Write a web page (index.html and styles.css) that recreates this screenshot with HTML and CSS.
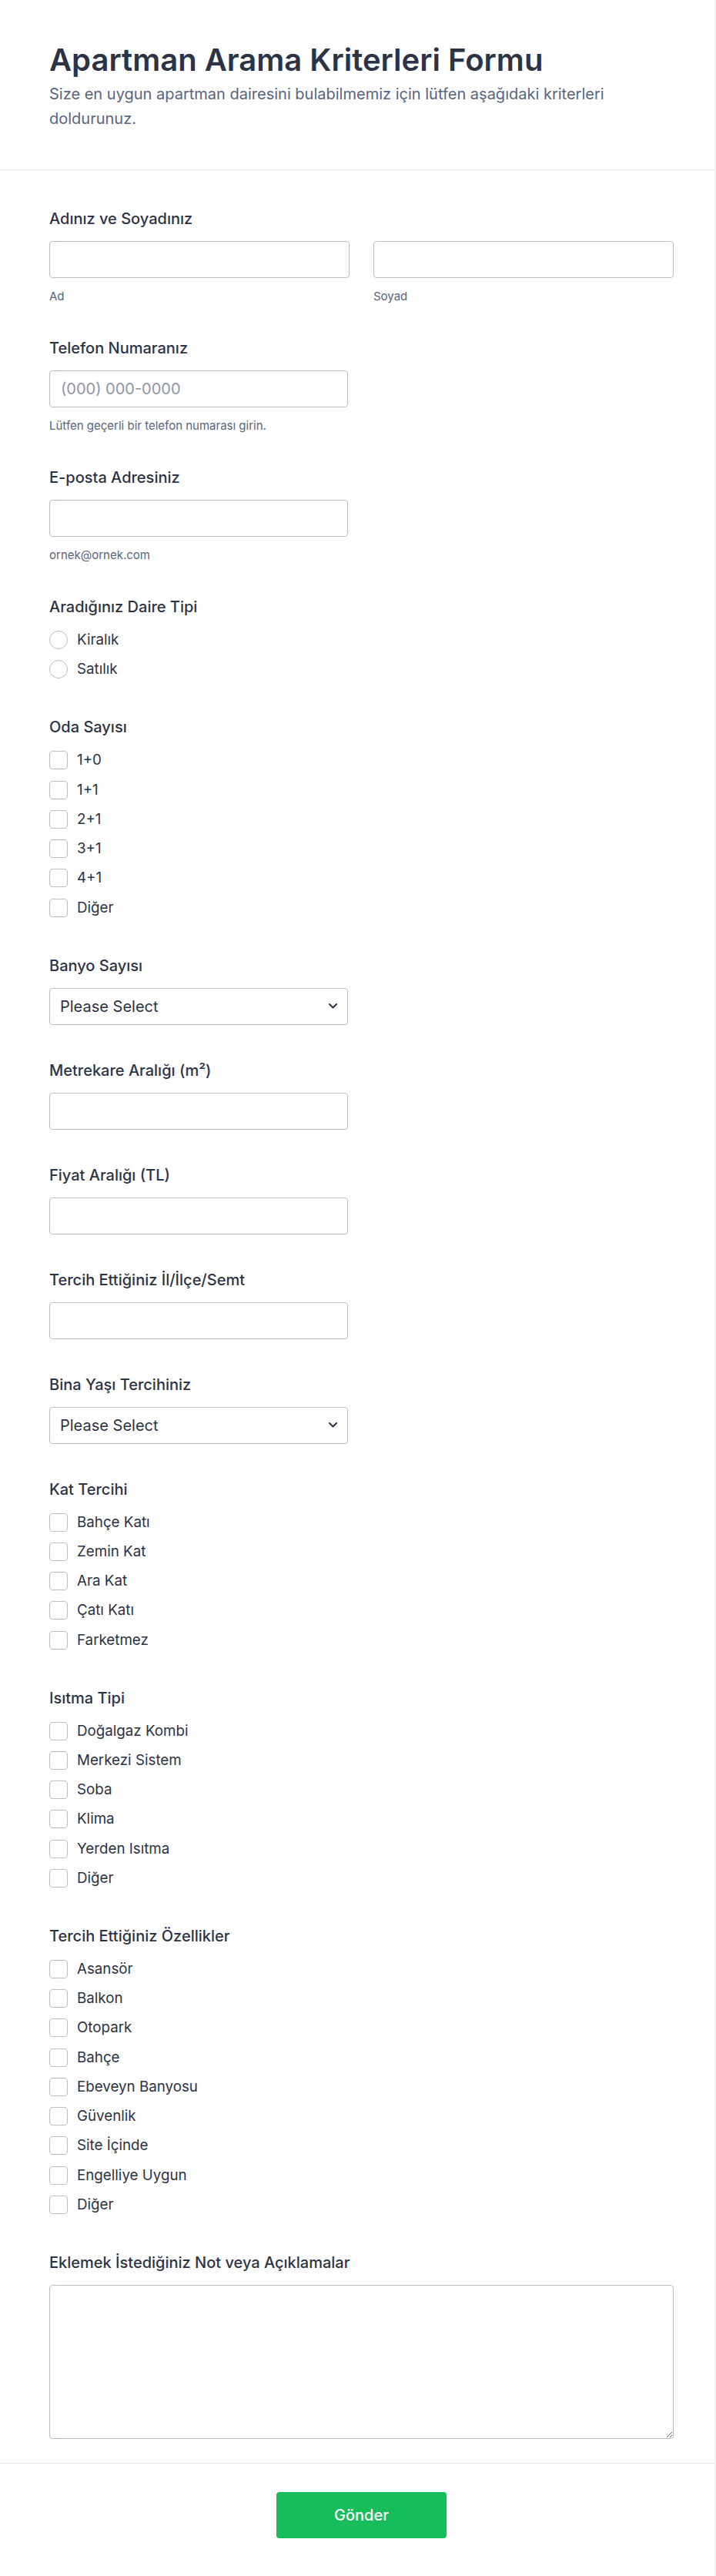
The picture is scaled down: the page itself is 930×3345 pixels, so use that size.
FILE: index.html
```html
<!DOCTYPE html>
<html lang="tr">
<head>
<meta charset="utf-8">
<title>Apartman Arama Kriterleri Formu</title>
<link rel="stylesheet" href="styles.css">
</head>
<body>
<div class="page">
  <header class="header">
    <h1 class="title">Apartman Arama Kriterleri Formu</h1>
    <p class="subtitle">Size en uygun apartman dairesini bulabilmemiz için lütfen aşağıdaki kriterleri doldurunuz.</p>
  </header>

  <main class="form">
    <div class="field has-sub">
      <label class="label">Adınız ve Soyadınız</label>
      <div class="name-row">
        <div class="name-col">
          <input class="input input-full" type="text">
          <span class="sublabel">Ad</span>
        </div>
        <div class="name-col">
          <input class="input input-full" type="text">
          <span class="sublabel">Soyad</span>
        </div>
      </div>
    </div>

    <div class="field has-sub">
      <label class="label">Telefon Numaranız</label>
      <input class="input" type="text" placeholder="(000) 000-0000">
      <span class="sublabel">Lütfen geçerli bir telefon numarası girin.</span>
    </div>

    <div class="field has-sub">
      <label class="label">E-posta Adresiniz</label>
      <input class="input" type="text">
      <span class="sublabel">ornek@ornek.com</span>
    </div>

    <div class="field opt-field">
      <label class="label">Aradığınız Daire Tipi</label>
      <div class="options">
        <div class="option"><span class="radio"></span><span>Kiralık</span></div>
        <div class="option"><span class="radio"></span><span>Satılık</span></div>
      </div>
    </div>

    <div class="field opt-field">
      <label class="label">Oda Sayısı</label>
      <div class="options">
        <div class="option"><span class="check"></span><span>1+0</span></div>
        <div class="option"><span class="check"></span><span>1+1</span></div>
        <div class="option"><span class="check"></span><span>2+1</span></div>
        <div class="option"><span class="check"></span><span>3+1</span></div>
        <div class="option"><span class="check"></span><span>4+1</span></div>
        <div class="option"><span class="check"></span><span>Diğer</span></div>
      </div>
    </div>

    <div class="field">
      <label class="label">Banyo Sayısı</label>
      <div class="select">
        <span>Please Select</span>
        <svg class="chevron" width="11" height="7" viewBox="0 0 11 7"><polyline points="1,1 5.5,5.5 10,1" fill="none" stroke="#2c3345" stroke-width="2" stroke-linecap="round" stroke-linejoin="round"/></svg>
      </div>
    </div>

    <div class="field">
      <label class="label">Metrekare Aralığı (m²)</label>
      <input class="input" type="text">
    </div>

    <div class="field">
      <label class="label">Fiyat Aralığı (TL)</label>
      <input class="input" type="text">
    </div>

    <div class="field">
      <label class="label">Tercih Ettiğiniz İl/İlçe/Semt</label>
      <input class="input" type="text">
    </div>

    <div class="field">
      <label class="label">Bina Yaşı Tercihiniz</label>
      <div class="select">
        <span>Please Select</span>
        <svg class="chevron" width="11" height="7" viewBox="0 0 11 7"><polyline points="1,1 5.5,5.5 10,1" fill="none" stroke="#2c3345" stroke-width="2" stroke-linecap="round" stroke-linejoin="round"/></svg>
      </div>
    </div>

    <div class="field opt-field">
      <label class="label">Kat Tercihi</label>
      <div class="options">
        <div class="option"><span class="check"></span><span>Bahçe Katı</span></div>
        <div class="option"><span class="check"></span><span>Zemin Kat</span></div>
        <div class="option"><span class="check"></span><span>Ara Kat</span></div>
        <div class="option"><span class="check"></span><span>Çatı Katı</span></div>
        <div class="option"><span class="check"></span><span>Farketmez</span></div>
      </div>
    </div>

    <div class="field opt-field">
      <label class="label">Isıtma Tipi</label>
      <div class="options">
        <div class="option"><span class="check"></span><span>Doğalgaz Kombi</span></div>
        <div class="option"><span class="check"></span><span>Merkezi Sistem</span></div>
        <div class="option"><span class="check"></span><span>Soba</span></div>
        <div class="option"><span class="check"></span><span>Klima</span></div>
        <div class="option"><span class="check"></span><span>Yerden Isıtma</span></div>
        <div class="option"><span class="check"></span><span>Diğer</span></div>
      </div>
    </div>

    <div class="field opt-field">
      <label class="label">Tercih Ettiğiniz Özellikler</label>
      <div class="options">
        <div class="option"><span class="check"></span><span>Asansör</span></div>
        <div class="option"><span class="check"></span><span>Balkon</span></div>
        <div class="option"><span class="check"></span><span>Otopark</span></div>
        <div class="option"><span class="check"></span><span>Bahçe</span></div>
        <div class="option"><span class="check"></span><span>Ebeveyn Banyosu</span></div>
        <div class="option"><span class="check"></span><span>Güvenlik</span></div>
        <div class="option"><span class="check"></span><span>Site İçinde</span></div>
        <div class="option"><span class="check"></span><span>Engelliye Uygun</span></div>
        <div class="option"><span class="check"></span><span>Diğer</span></div>
      </div>
    </div>

    <div class="field">
      <label class="label">Eklemek İstediğiniz Not veya Açıklamalar</label>
      <textarea class="textarea"></textarea>
    </div>
  </main>

  <footer class="footer">
    <button class="submit" type="button">Gönder</button>
  </footer>
</div>
</body>
</html>
```

FILE: styles.css
```css
* {
  box-sizing: border-box;
}

body {
  margin: 0;
  background: #f3f3f6;
  font-family: Inter, "Noto Sans", sans-serif;
  color: #2c3345;
}

.page {
  width: 928px;
  background: #ffffff;
}

.header {
  padding: 54px 0 50px 64px;
  border-bottom: 1px solid #e3e5ea;
}

.title {
  margin: 0;
  font-size: 40px;
  line-height: 48px;
  font-weight: 600;
  color: #2c3345;
}

.subtitle {
  margin: 4px 0 0;
  width: 811px;
  font-size: 20px;
  line-height: 32px;
  font-weight: 400;
  color: #57647e;
}

.form {
  padding: 51px 0 31px 64px;
  border-bottom: 1px solid #e3e5ea;
}

.field {
  width: 811px;
  margin-bottom: 47px;
}

.field:last-child {
  margin-bottom: 0;
}

.field.has-sub {
  margin-bottom: 45px;
}

.field.opt-field {
  margin-bottom: 51px;
}

.label {
  display: block;
  font-size: 20px;
  line-height: 24px;
  font-weight: 500;
  color: #2c3345;
  margin-bottom: 17px;
}

.name-row {
  display: grid;
  grid-template-columns: 390px 390px;
  column-gap: 31px;
}

.input {
  display: block;
  width: 388px;
  height: 48px;
  margin: 0;
  border: 1px solid #b8bdc9;
  border-radius: 4px;
  padding: 0 14px;
  background: #ffffff;
  font-family: Inter, "Noto Sans", sans-serif;
  font-size: 20px;
  color: #2c3345;
  outline: none;
}

.input-full {
  width: 100%;
}

.input::placeholder {
  color: #8f96a3;
}

.sublabel {
  display: block;
  margin-top: 14px;
  font-size: 15px;
  line-height: 20px;
  color: #57647e;
}

.options {
  display: flex;
  flex-direction: column;
  gap: 14.25px;
  padding-top: 2px;
}

.option {
  display: flex;
  align-items: center;
  gap: 12px;
  height: 24px;
  font-size: 18.75px;
  line-height: 24px;
  color: #2c3345;
}

.radio {
  width: 24px;
  height: 24px;
  flex: none;
  border: 1px solid #b8bdc9;
  border-radius: 50%;
  background: #ffffff;
}

.check {
  width: 24px;
  height: 24px;
  flex: none;
  border: 1px solid #b8bdc9;
  border-radius: 4px;
  background: #ffffff;
}

.select {
  display: flex;
  align-items: center;
  justify-content: space-between;
  width: 388px;
  height: 48px;
  border: 1px solid #b8bdc9;
  border-radius: 4px;
  padding: 0 13px;
  font-size: 20px;
  color: #2c3345;
  background: #ffffff;
}

.chevron {
  display: block;
}

.textarea {
  display: block;
  width: 811px;
  height: 200px;
  margin: 0;
  border: 1px solid #b8bdc9;
  border-radius: 4px;
  padding: 12px 14px;
  font-family: Inter, "Noto Sans", sans-serif;
  font-size: 20px;
  color: #2c3345;
  background: #ffffff;
  resize: vertical;
  outline: none;
}

.footer {
  display: flex;
  justify-content: center;
  width: 875px;
  padding: 37px 0 49px 64px;
}

.submit {
  width: 221px;
  height: 60px;
  border: none;
  border-radius: 4px;
  background: #18bd5b;
  color: #ffffff;
  font-family: Inter, "Noto Sans", sans-serif;
  font-size: 20px;
  font-weight: 500;
  cursor: pointer;
}
```
